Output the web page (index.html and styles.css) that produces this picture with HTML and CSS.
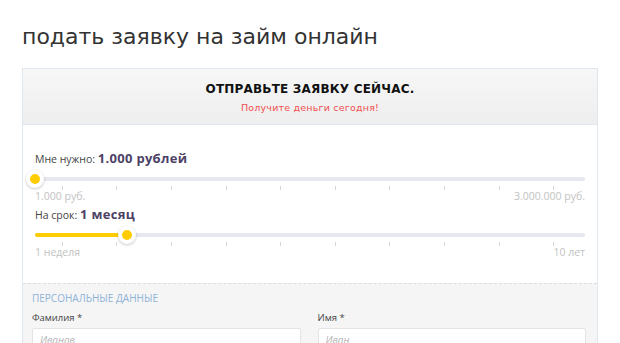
FILE: index.html
```html
<!DOCTYPE html>
<html lang="ru">
<head>
<meta charset="utf-8">
<title>подать заявку на займ онлайн</title>
<link rel="stylesheet" href="styles.css">
</head>
<body>
<h1 class="page-title">подать заявку на займ онлайн</h1>
<div class="card">
  <div class="card-head">
    <div class="card-title">ОТПРАВЬТЕ ЗАЯВКУ СЕЙЧАС.</div>
    <div class="card-sub">Получите деньги сегодня!</div>
  </div>
  <div class="card-body">
    <div class="field-label first">Мне нужно: <b class="value">1.000 рублей</b></div>
    <div class="slider">
      <div class="track"><div class="fill" style="width:0"></div></div>
      <span class="knob" style="left:0"></span>
    </div>
    <div class="ticks"><i></i><i></i><i></i><i></i><i></i><i></i><i></i><i></i><i></i><i></i></div>
    <div class="range-labels"><span>1.000 руб.</span><span>3.000.000 руб.</span></div>

    <div class="field-label second">На срок: <b class="value">1 месяц</b></div>
    <div class="slider second">
      <div class="track"><div class="fill" style="width:92px"></div></div>
      <span class="knob" style="left:92px"></span>
    </div>
    <div class="ticks"><i></i><i></i><i></i><i></i><i></i><i></i><i></i><i></i><i></i><i></i></div>
    <div class="range-labels"><span>1 неделя</span><span>10 лет</span></div>
  </div>
  <div class="section">
    <div class="section-title">ПЕРСОНАЛЬНЫЕ ДАННЫЕ</div>
    <div class="form-grid">
      <div class="form-field">
        <label class="form-label">Фамилия *</label>
        <input class="input" type="text" placeholder="Иванов">
      </div>
      <div class="form-field">
        <label class="form-label">Имя *</label>
        <input class="input" type="text" placeholder="Иван">
      </div>
    </div>
  </div>
</div>
</body>
</html>
```

FILE: styles.css
```css
html, body {
  margin: 0;
  padding: 0;
  background: #ffffff;
  overflow: hidden;
}
body {
  font-family: "Open Sans", "DejaVu Sans", sans-serif;
  color: #333;
}
.page-title {
  margin: 0;
  padding: 24px 22px 0;
  font-family: "DejaVu Sans", sans-serif;
  font-size: 22px;
  font-weight: normal;
  line-height: 26px;
  color: #333;
  margin-bottom: 18px;
}
.card {
  margin: 0 22px;
  border: 1px solid #e1e7ef;
  border-bottom: none;
}
.card-head {
  box-sizing: border-box;
  height: 56px;
  padding-top: 12px;
  background: linear-gradient(#f7f7f7, #eeeeee);
  border-bottom: 1px solid #e1e7ef;
  text-align: center;
  font-family: "DejaVu Sans", sans-serif;
}
.card-title {
  font-size: 12px;
  font-weight: bold;
  line-height: 16px;
  color: #111;
  letter-spacing: 0.2px;
}
.card-sub {
  margin-top: 5px;
  font-size: 9.5px;
  line-height: 12px;
  color: #f04f4f;
  letter-spacing: 0.2px;
}
.card-body {
  background: #fff;
  padding: 25px 12px 25px;
}
.field-label {
  font-size: 10.5px;
  line-height: 16px;
  color: #444;
}
.field-label.second { margin-top: 4px; }
.value {
  font-size: 13px;
  font-weight: 700;
  color: #4d4266;
  letter-spacing: 0.3px;
}
.slider {
  position: relative;
  height: 18px;
  margin-top: 3px;
  display: flex;
  align-items: center;
}
.slider.second { margin-top: 3px; }
.track {
  flex: 1;
  height: 4px;
  border-radius: 2px;
  background: #e6e8ee;
  overflow: hidden;
}
.fill {
  height: 100%;
  background: #ffcc00;
}
.knob {
  position: absolute;
  top: 0;
  width: 10px;
  height: 10px;
  margin-left: -9px;
  border: 4px solid #fff;
  border-radius: 50%;
  background: #ffcc00;
  box-shadow: 0 1px 3px rgba(0, 0, 0, 0.22);
}
.ticks {
  display: grid;
  grid-template-columns: repeat(10, 1fr);
  margin-top: -2px;
  margin-right: 4px;
  height: 4px;
}
.ticks i {
  justify-self: center;
  width: 1px;
  height: 4px;
  background: #d4d6dc;
}
.range-labels {
  display: flex;
  justify-content: space-between;
  font-size: 10.5px;
  line-height: 12px;
  color: #c2c2c2;
}
.section {
  background: #f5f5f5;
  border-top: 1px dashed #dddddd;
  padding: 8px 11px 0 9px;
  height: 80px;
}
.section-title {
  font-size: 10px;
  line-height: 12px;
  color: #8db3d8;
}
.form-grid {
  display: grid;
  grid-template-columns: 1fr 1fr;
  column-gap: 17px;
  margin-top: 8px;
}
.form-field {
  display: flex;
  flex-direction: column;
}
.form-label {
  font-size: 9.5px;
  line-height: 12px;
  color: #444;
  margin-bottom: 4px;
}
.input {
  box-sizing: border-box;
  height: 24px;
  border: 1px solid #e3e3e3;
  border-radius: 2px;
  background: #fff;
  padding: 0 7px;
  font-family: "Open Sans", sans-serif;
  font-size: 10px;
  font-style: italic;
  outline: none;
}
.input::placeholder {
  color: #b5b5b5;
}
```
